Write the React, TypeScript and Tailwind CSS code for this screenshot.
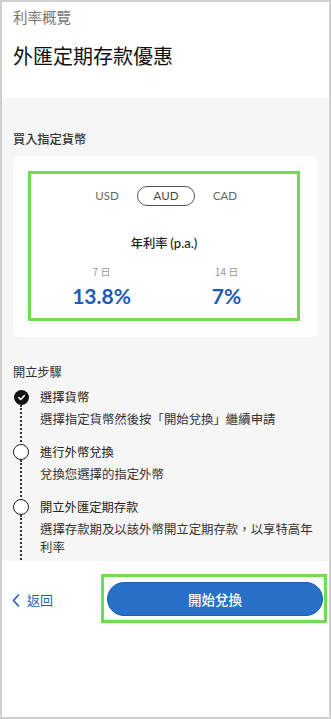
import React from "react";

const CJK = '"Noto Sans CJK TC", "Noto Sans", sans-serif';
const LAT = 'Lato, "Noto Sans CJK TC", sans-serif';

function Step({
  title,
  desc,
  done,
  last,
}: {
  title: string;
  desc: React.ReactNode;
  done?: boolean;
  last?: boolean;
}) {
  return (
    <div className="flex">
      <div className="flex w-[16px] flex-col items-center">
        {done ? (
          <div className="mt-[3px] flex h-[15px] w-[15px] shrink-0 items-center justify-center rounded-full bg-[#111]">
            <svg width="9" height="9" viewBox="0 0 10 10">
              <polyline
                points="2,5.2 4.2,7.2 8,3"
                fill="none"
                stroke="white"
                strokeWidth="1.8"
                strokeLinecap="round"
                strokeLinejoin="round"
              />
            </svg>
          </div>
        ) : (
          <div className="mt-[2px] h-[16px] w-[16px] shrink-0 rounded-full border-[1.5px] border-[#222] bg-white" />
        )}
        <div className={`w-0 flex-1 border-l-2 border-dotted border-[#333] ${last ? "min-h-[80px]" : ""}`} />
      </div>
      <div className={`ml-[11px] flex-1 ${last ? "" : "pb-[14px]"}`}>
        <div className="text-[12.3px] leading-[20px] text-[#222]">{title}</div>
        <div className="mt-[3px] text-[12.4px] leading-[18px] text-[#333]">{desc}</div>
      </div>
    </div>
  );
}

export default function App() {
  return (
    <div
      className="flex h-[719px] w-[331px] flex-col overflow-hidden border-2 border-[#d0d0d0] bg-white"
      style={{ fontFamily: CJK }}
    >
      {/* Header */}
      <div className="h-[96px] shrink-0 bg-white px-[11px] pt-[6px]">
        <div className="text-[14.5px] leading-[18px] text-[#777]">利率概覽</div>
        <div className="mt-[16px] text-[20px] leading-[28px] text-[#111]">外匯定期存款優惠</div>
      </div>

      {/* Gray content */}
      <div className="h-[463px] shrink-0 overflow-hidden bg-[#f6f6f6] px-[11px] pt-[33px]">
        <div className="text-[12.2px] font-medium leading-[16px] text-[#333]">買入指定貨幣</div>
        <div className="mt-[9px] rounded-[7px] bg-white pb-[16px] pl-[15px] pr-[18px] pt-[15px]">
          <div className="border-[3px] border-[#70dc50] pb-[9px] pt-[12px]">
            <div className="flex items-center justify-center gap-[10px] pl-[4px]" style={{ fontFamily: LAT }}>
              <div className="w-[40px] text-center text-[11.5px] text-[#666]">USD</div>
              <div className="flex h-[20px] w-[58px] items-center justify-center rounded-full border-[1.5px] border-[#555] text-[11.5px] text-[#444]">
                AUD
              </div>
              <div className="w-[40px] text-center text-[11.5px] text-[#666]">CAD</div>
            </div>
            <div className="mt-[29px] text-center text-[12.3px] font-medium leading-[16px] text-[#222]">
              年利率 <span className="text-[13px]" style={{ fontFamily: LAT }}>(p.a.)</span>
            </div>
            <div className="mt-[14px] flex justify-center gap-[25px]">
              <div className="flex w-[100px] flex-col items-center">
                <div className="text-[10px] leading-[14px] text-[#999]">7 日</div>
                <div
                  className="mt-[4px] text-[21px] font-bold leading-[26px] text-[#1a5cb8]"
                  style={{ fontFamily: LAT }}
                >
                  13.8%
                </div>
              </div>
              <div className="flex w-[100px] flex-col items-center">
                <div className="text-[10px] leading-[14px] text-[#999]">14 日</div>
                <div
                  className="mt-[4px] text-[21px] font-bold leading-[26px] text-[#1a5cb8]"
                  style={{ fontFamily: LAT }}
                >
                  7%
                </div>
              </div>
            </div>
          </div>
        </div>

        <div className="mt-[26px] text-[12.2px] leading-[18px] text-[#333]">開立步驟</div>
        <div className="mt-[6px]">
          <Step title="選擇貨幣" desc="選擇指定貨幣然後按「開始兌換」繼續申請" done />
          <Step title="進行外幣兌換" desc="兌換您選擇的指定外幣" />
          <Step
            title="開立外匯定期存款"
            desc="選擇存款期及以該外幣開立定期存款，以享特高年利率"
            last
          />
        </div>
      </div>

      {/* Footer */}
      <div className="flex flex-1 items-start bg-white pl-[10px] pr-[2px] pt-[13px]">
        <div className="mt-[17px] flex items-center text-[#1f5fb5]">
          <svg width="8" height="13" viewBox="0 0 8 13">
            <polyline
              points="6.5,1 1.5,6.5 6.5,12"
              fill="none"
              stroke="#1f5fb5"
              strokeWidth="1.6"
              strokeLinecap="round"
              strokeLinejoin="round"
            />
          </svg>
          <span className="ml-[7px] text-[13px] leading-[18px]">返回</span>
        </div>
        <div className="ml-auto w-[226px] border-[3px] border-[#70dc50] pb-[4px] pl-[3px] pr-[1px] pt-[5px]">
          <button className="flex h-[34px] w-full items-center justify-center rounded-full border border-[#1d5cae] bg-[#2870c8] text-[13.5px] font-medium text-white">
            開始兌換
          </button>
        </div>
      </div>
    </div>
  );
}
